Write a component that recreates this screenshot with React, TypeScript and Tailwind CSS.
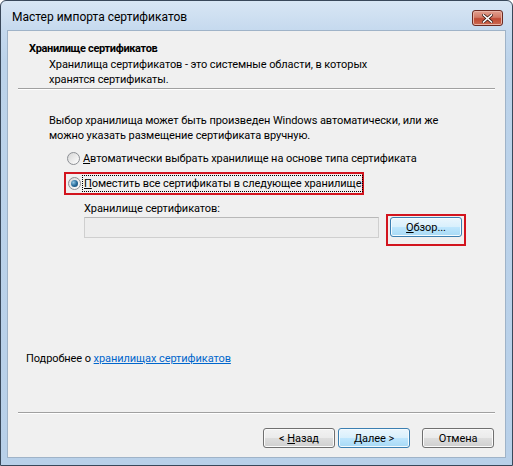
import React from "react";

function WinButton({
  children,
  blue,
  className = "",
}: {
  children: React.ReactNode;
  blue?: boolean;
  className?: string;
}) {
  const look = blue
    ? "border-[#3c7fb1] bg-[linear-gradient(to_bottom,#eaf6fd_0%,#d9f0fc_48%,#bee6fd_52%,#a7d9f5_100%)] shadow-[inset_0_0_0_1px_#f4fbfe]"
    : "border-[#707070] bg-[linear-gradient(to_bottom,#f2f2f2_0%,#ebebeb_48%,#dddddd_52%,#cfcfcf_100%)] shadow-[inset_0_0_0_1px_#fbfbfb]";
  return (
    <div
      className={`h-[20px] w-[72px] rounded-[3px] border flex items-center justify-center text-[11px] leading-none text-black ${look} ${className}`}
    >
      {children}
    </div>
  );
}

function Radio({ checked }: { checked?: boolean }) {
  return (
    <div className="w-[13px] h-[13px] rounded-full border border-[#8c8f94] bg-[linear-gradient(135deg,#d6d6d6,#ffffff)] flex items-center justify-center shrink-0">
      {checked && (
        <div className="w-[7px] h-[7px] rounded-full bg-[radial-gradient(circle_at_35%_35%,#8fc6e4_0%,#2a6d9c_50%,#0d3f66_100%)]" />
      )}
    </div>
  );
}

export default function App() {
  return (
    <div className="w-[513px] h-[466px] font-['Roboto',sans-serif] text-[12px] text-black">
      <div className="w-[513px] h-[466px] rounded-t-[6px] border border-[#39485a] bg-[linear-gradient(to_bottom,#d8e6f4_0px,#c5d9ee_30px,#bcd3ea_60px,#b8d0e9_100%)] flex flex-col px-[7px] pb-[7px]">
        {/* title bar */}
        <div className="h-[29px] shrink-0 flex items-start">
          <div className="pl-[4px] pt-[8px] leading-[16px] text-[12px]">Мастер импорта сертификатов</div>
          <div className="ml-auto mt-[9px] mr-[2px] w-[31px] h-[16px] rounded-[3px] border border-[#6b2a22] bg-[linear-gradient(to_bottom,#e2a08f_0%,#d27a66_45%,#bf4a33_55%,#cc6a52_100%)] shadow-[inset_0_0_0_1px_#e9b3a5] flex items-center justify-center">
            <svg width="11" height="9" viewBox="0 0 11 9">
              <path d="M1.5 1 L9.5 8 M9.5 1 L1.5 8" stroke="#3a1a14" strokeWidth="3" strokeLinecap="square" />
              <path d="M1.5 1 L9.5 8 M9.5 1 L1.5 8" stroke="#ffffff" strokeWidth="1.6" strokeLinecap="square" />
            </svg>
          </div>
        </div>

        {/* client area */}
        <div className="h-[428px] bg-[#f0f0f0] border border-[#9fb3c8] flex flex-col -mx-px text-[11px] tracking-[-0.08px]">
          {/* header */}
          <div className="pt-[10px]">
            <div className="pl-[21px] font-bold leading-[15px] tracking-[-0.35px]">Хранилище сертификатов</div>
            <div className="pl-[41px] mt-[1px] leading-[15px]">
              Хранилища сертификатов - это системные области, в которых
              <br />
              хранятся сертификаты.
            </div>
          </div>
          <div className="mx-[10px] mt-[1px] border-t border-t-[#a0a0a0] border-b border-b-white" />

          {/* body */}
          <div className="pl-[41px] mt-[23px] leading-[15px]">
            Выбор хранилища может быть произведен Windows автоматически, или же
            <br />
            можно указать размещение сертификата вручную.
          </div>

          <div className="mt-[8px] pl-[59px] flex items-center h-[15px] leading-[15px]">
            <Radio />
            <span className="ml-[1px] pl-[2px] whitespace-nowrap">
              <span className="underline">А</span>втоматически выбрать хранилище на основе типа сертификата
            </span>
          </div>

          <div className="mt-[6px] ml-[56px] w-[300px] h-[23px] border-2 border-[#d2141e] flex items-center pl-[2px]">
            <Radio checked />
            <span className="ml-[1px] px-[1px] border border-dotted border-black leading-[15px] whitespace-nowrap">
              <span className="underline">П</span>оместить все сертификаты в следующее хранилище
            </span>
          </div>

          <div className="mt-[6px] pl-[76px] leading-[15px]">Хранилище сертификатов:</div>

          <div className="mt-[1px] pl-[76px] flex items-start">
            <div className="w-[295px] h-[21px] border border-[#cfcfcf] border-t-[#b8b8b8] bg-[#ededed]" />
            <div className="ml-[7px] -mt-[3px] w-[80px] h-[32px] border-2 border-[#d2141e] pl-[2px] pt-[1px]">
              <WinButton blue className="w-[71px]">
                <span>
                  <span className="underline">О</span>бзор...
                </span>
              </WinButton>
            </div>
          </div>

          <div className="mt-[105px] pl-[18px] leading-[15px]">
            Подробнее о{" "}
            <span className="text-[#0066cc] underline">хранилищах сертификатов</span>
          </div>

          {/* footer */}
          <div className="mt-auto">
            <div className="mx-[10px] border-t border-t-[#a0a0a0] border-b border-b-white" />
            <div className="mt-[14px] mb-[9px] flex pr-[11px]">
              <div className="ml-auto flex">
                <WinButton>
                  <span>
                    &lt; <span className="underline">Н</span>азад
                  </span>
                </WinButton>
                <WinButton blue className="ml-[3px]">
                  <span>
                    <span className="underline">Д</span>алее &gt;
                  </span>
                </WinButton>
                <WinButton className="ml-[12px]">Отмена</WinButton>
              </div>
            </div>
          </div>
        </div>
      </div>
    </div>
  );
}
